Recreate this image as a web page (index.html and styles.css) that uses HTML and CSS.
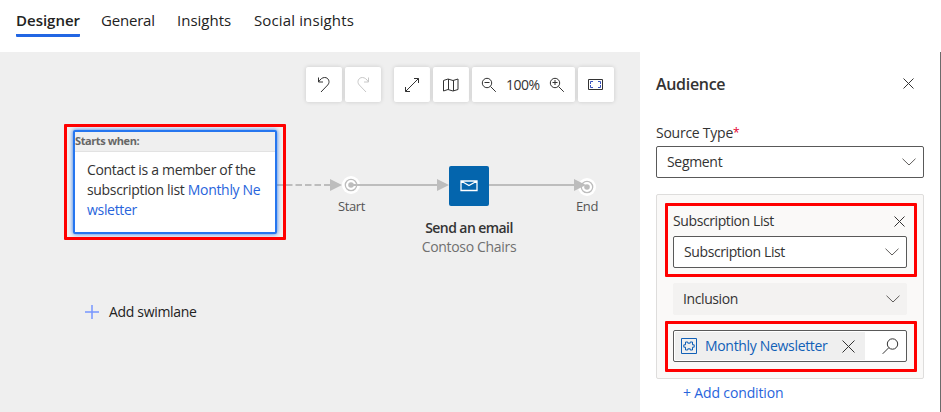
FILE: index.html
```html
<!DOCTYPE html>
<html lang="en">
<head>
<meta charset="utf-8">
<title>Customer journey designer</title>
<link rel="stylesheet" href="styles.css">
</head>
<body>
<nav class="tabs">
  <a class="tab active"><span class="t-designer">Designer</span></a>
  <a class="tab t-general">General</a>
  <a class="tab t-insights">Insights</a>
  <a class="tab t-social">Social insights</a>
</nav>
<main class="workspace">
  <section class="canvas">
    <div class="toolbar">
      <button class="tool"><svg width="36" height="36" viewBox="0 0 36 36"><path d="M12.500 10.500v4.500H17M12.700 14.800c1.500-2.500 3.500-4.300 6-4.300c3.800 0 5.800 4.500 3 7.500L15 25"/></svg></button>
      <button class="tool muted"><svg width="36" height="36" viewBox="0 0 36 36"><path d="M23.500 10.500v4.500H19M23.300 14.800c-1.500-2.500-3.500-4.300-6-4.300c-3.800 0-5.800 4.500-3 7.500L21 25"/></svg></button>
      <button class="tool spaced"><svg width="36" height="36" viewBox="0 0 36 36"><path d="M11.500 24.500L24.500 11.500M20 11.500h4.500V16M11.500 20v4.500H16"/></svg></button>
      <button class="tool"><svg width="36" height="36" viewBox="0 0 36 36"><path d="M10.500 13.500l4.500-1.500l5 1.500l5-1.500v10.500l-5 1.500l-5-1.500l-4.500 1.500zM15.500 12V22.500M20.500 13.500V24"/></svg></button>
      <div class="tool zoom">
        <svg width="16" height="16" viewBox="0 0 16 16"><circle cx="6" cy="6" r="4.700"/><path d="M3.500 5.500h5M9.500 9.500l5.300 5.300"/></svg>
        <span class="zoom-value">100%</span>
        <svg width="16" height="16" viewBox="0 0 16 16"><circle cx="6" cy="6" r="4.700"/><path d="M3.500 5.500h5M6 3v5M9.500 9.500l5.300 5.300"/></svg>
      </div>
      <button class="tool"><svg width="36" height="36" viewBox="0 0 36 36"><path d="M10.500 12.500h14v10h-14z"/><path class="corners" d="M15 14.500h-2.500V17M12.500 18V20.500H15M20 14.500h2.500V17M22.500 18V20.500H20"/></svg></button>
    </div>
    <svg class="flow" width="640" height="360" viewBox="0 0 640 360">
      <g class="line"><path d="M276 133H285"/><path stroke-dasharray="6.500 3" d="M286 133H331"/><path d="M351 133H438M489 133H575"/></g>
      <circle class="halo" cx="351" cy="133" r="9"/><circle class="halo" cx="587" cy="135" r="9"/>
      <g class="ring"><circle cx="351" cy="133" r="5.700"/><circle cx="587" cy="135" r="5.700"/></g>
      <g class="dot"><circle cx="351" cy="133" r="2.800"/><circle cx="587" cy="135" r="2.800"/>
      <path d="M351 132h12v2h-12zM330 127l12 6-12 6zM437 127l12 6-12 6zM574 127l12 6-12 6z"/></g>
    </svg>
    <article class="trigger">
      <h2 class="trigger-title">Starts when:</h2>
      <p class="trigger-body"><span>Contact is a member of the</span><br><span>subscription list <a>Monthly Ne</a></span><br><a>wsletter</a></p>
    </article>
    <div class="highlight hl-trigger"></div>
    <span class="node-label start">Start</span>
    <div class="email-tile"><svg width="18" height="12" viewBox="0 0 18 12"><path d="M1 1h16v9.500H1zM1 1l8 4.500L17 1"/></svg></div>
    <div class="email-text"><strong>Send an email</strong><span>Contoso Chairs</span></div>
    <span class="node-label end">End</span>
    <div class="swimlane"><svg width="14" height="14" viewBox="0 0 14 14"><path d="M0 7h14M7 0v14"/></svg><span>Add swimlane</span></div>
  </section>
  <aside class="panel">
    <header class="panel-head"><h1>Audience</h1><svg width="11" height="11" viewBox="0 0 11 11"><path d="M.5.5l10 10M10.500.5l-10 10"/></svg></header>
    <div class="label"><span class="source">Source Type</span><span class="required">*</span></div>
    <div class="select"><span class="v-segment">Segment</span><svg width="14" height="8" viewBox="0 0 14 8"><path d="M.5.7L7 7L13.500.7"/></svg></div>
    <div class="group">
      <div class="group-head"><span>Subscription List</span><svg width="11" height="11" viewBox="0 0 11 11"><path d="M.5.5l10 10M10.500.5l-10 10"/></svg></div>
      <div class="select"><span>Subscription List</span><svg width="14" height="8" viewBox="0 0 14 8"><path d="M.5.7L7 7L13.500.7"/></svg></div>
      <div class="select inclusion"><span>Inclusion</span><svg width="14" height="8" viewBox="0 0 14 8"><path d="M.5.7L7 7L13.500.7"/></svg></div>
      <div class="lookup">
        <div class="chip">
          <svg class="entity" width="16" height="16" viewBox="0 0 16 16"><path d="M.5.5h15v15H.5z"/><path d="M4.500 4h2.300v1.200h2.400V4h2.300v2.800h1.700v2.400h-1.700V12H9.200v-1.200H6.800V12H4.500V9.200H2.800V6.800h1.700z"/></svg>
          <a>Monthly Newsletter</a>
          <svg class="remove" width="13" height="13" viewBox="0 0 13 13"><path d="M.5.5l12 12M12.500.5l-12 12"/></svg>
        </div>
        <svg class="search" width="17" height="17" viewBox="0 0 17 17"><circle cx="10.500" cy="6" r="5.200"/><path d="M6.800 9.700L.7 15.800"/></svg>
      </div>
      <div class="highlight hl-list"></div>
      <div class="highlight hl-lookup"></div>
    </div>
    <a class="add">+ Add condition</a>
  </aside>
</main>
</body>
</html>
```
FILE: styles.css
```css
* { box-sizing: border-box; }
body { margin: 0; width: 941px; height: 412px; overflow: hidden; background: #fff; color: #333; font: 14px/20px "Open Sans", "Noto Sans", sans-serif; letter-spacing: -.32px; }
h1, h2, p { margin: 0; }
svg { display: block; flex: none; fill: none; stroke: #333; stroke-width: 1; }
span, a, strong { white-space: nowrap; }
.tabs { display: flex; gap: 21px; height: 52px; padding: 9px 16px 0; font-size: 15px; line-height: 22px; color: #222; letter-spacing: -.2px; }
.tab { height: 28px; }
.active { width: 64px; border-bottom: 3px solid #2266e3; font-weight: 600; border-radius: 1px; letter-spacing: 0; }
.t-general { width: 55px; }
.t-insights { width: 56px; letter-spacing: 0; }
.t-social { letter-spacing: .13px; }
.workspace { display: flex; height: 360px; }
.canvas { position: relative; width: 640px; background: #efefef; }
.toolbar { display: flex; gap: 3px; padding: 15px 0 0 306px; }
.tool { display: flex; width: 36px; height: 35px; padding: 0; border: 0; border-radius: 2px; background: #fff; box-shadow: 0 0 4px rgba(0,0,0,.16); align-items: center; justify-content: center; }
.muted svg { stroke: #c8c8c8; }
.spaced { margin-left: 10px; }
.zoom { width: 103px; gap: 9px; padding-right: 1px; }
.zoom-value { width: 34px; letter-spacing: -.5px; }
.corners { stroke: #3b55c0; }
.flow { position: absolute; left: 0; top: 0; stroke: none; }
.line { stroke: #bdbdbd; stroke-width: 2; }
.halo { fill: #fff; }
.ring { stroke: #bdbdbd; stroke-width: 1.3; }
.dot { fill: #bdbdbd; }
.trigger { position: absolute; left: 73px; top: 78px; width: 204px; height: 104px; border: 2px solid #2676ef; border-radius: 2px; background: #fff; box-shadow: 0 0 4px #2878ee; }
.trigger-title { height: 20px; background: #efefef; border-bottom: 1px solid #e2e2e2; color: #666; font-size: 11px; line-height: 18px; font-weight: 700; letter-spacing: -.4px; }
.trigger-body { padding: 8px 0 0 12px; }
.trigger-body a, .add { color: #2864dc; }
.highlight { position: absolute; border: 3px solid #f00; border-radius: 1px; }
.hl-trigger { left: 64px; top: 72px; width: 222px; height: 116px; }
.node-label { position: absolute; color: #555; font-size: 13px; line-height: 18px; letter-spacing: -.4px; }
.start { left: 338px; top: 145px; }
.end { left: 576px; top: 145px; }
.email-tile { position: absolute; left: 449px; top: 114px; display: flex; width: 40px; height: 40px; border-radius: 2px; background: #0465ad; align-items: center; justify-content: center; }
.email-tile svg { stroke: #fff; stroke-width: 1.3; }
.email-text { position: absolute; left: 419px; top: 166px; display: flex; width: 100px; flex-direction: column; align-items: center; line-height: 19px; color: #707070; }
.email-text strong { color: #333; font-weight: 600; letter-spacing: -.58px; }
.swimlane { position: absolute; left: 85px; top: 250px; display: flex; gap: 10px; align-items: center; color: #222; }
.swimlane svg { stroke: #7796ff; stroke-width: 1.5; }
.panel { width: 301px; padding: 21px 16px 0; border-right: 1px solid #6b6b6b; }
.panel-head { display: flex; justify-content: space-between; align-items: center; height: 22px; padding-right: 10px; }
.panel-head svg { margin-top: -2px; }
h1 { font-size: 16px; line-height: 22px; font-weight: 600; }
.label { display: flex; margin-top: 28px; height: 23px; line-height: 20px; }
.source { font-weight: 500; letter-spacing: -.25px; }
.required { color: #e3002b; font-size: 12px; }
.select { display: flex; width: 268px; height: 32px; padding: 0 7px 0 10px; border: 1px solid #595959; border-radius: 2px; background: #fff; align-items: center; justify-content: space-between; }
.select svg { stroke: #605e5c; }
.group { position: relative; width: 268px; height: 185px; margin-top: 16px; padding: 15px 16px; border: 1px solid #dedddc; border-radius: 2px; background: #faf9f8; }
.group-head { display: flex; height: 26px; padding-right: 2px; justify-content: space-between; align-items: center; padding-bottom: 4px; letter-spacing: -.4px; }
.group .select { width: 234px; letter-spacing: -.4px; }
.group .inclusion { margin: 15px 0; padding: 0 6px 0 9px; border-color: #f3f2f1; background: #f3f2f1; }
.lookup { display: flex; width: 234px; height: 32px; padding: 1px 7px 1px 1px; border: 1px solid #595959; border-radius: 2px; background: #fff; align-items: center; justify-content: space-between; }
.chip { display: flex; width: 190px; height: 28px; padding: 0 10px 0 6px; background: #efefef; align-items: center; }
.chip a { margin-left: 8px; color: #1160b7; }
.chip .entity { stroke: #1160b7; }
.remove { margin-left: auto; }
.hl-list { left: 8px; top: 8px; width: 252px; height: 74px; }
.hl-lookup { left: 8px; top: 126px; width: 252px; height: 51px; }
.add { display: block; margin: 4px 0 0 27px; letter-spacing: -.15px; }
```
